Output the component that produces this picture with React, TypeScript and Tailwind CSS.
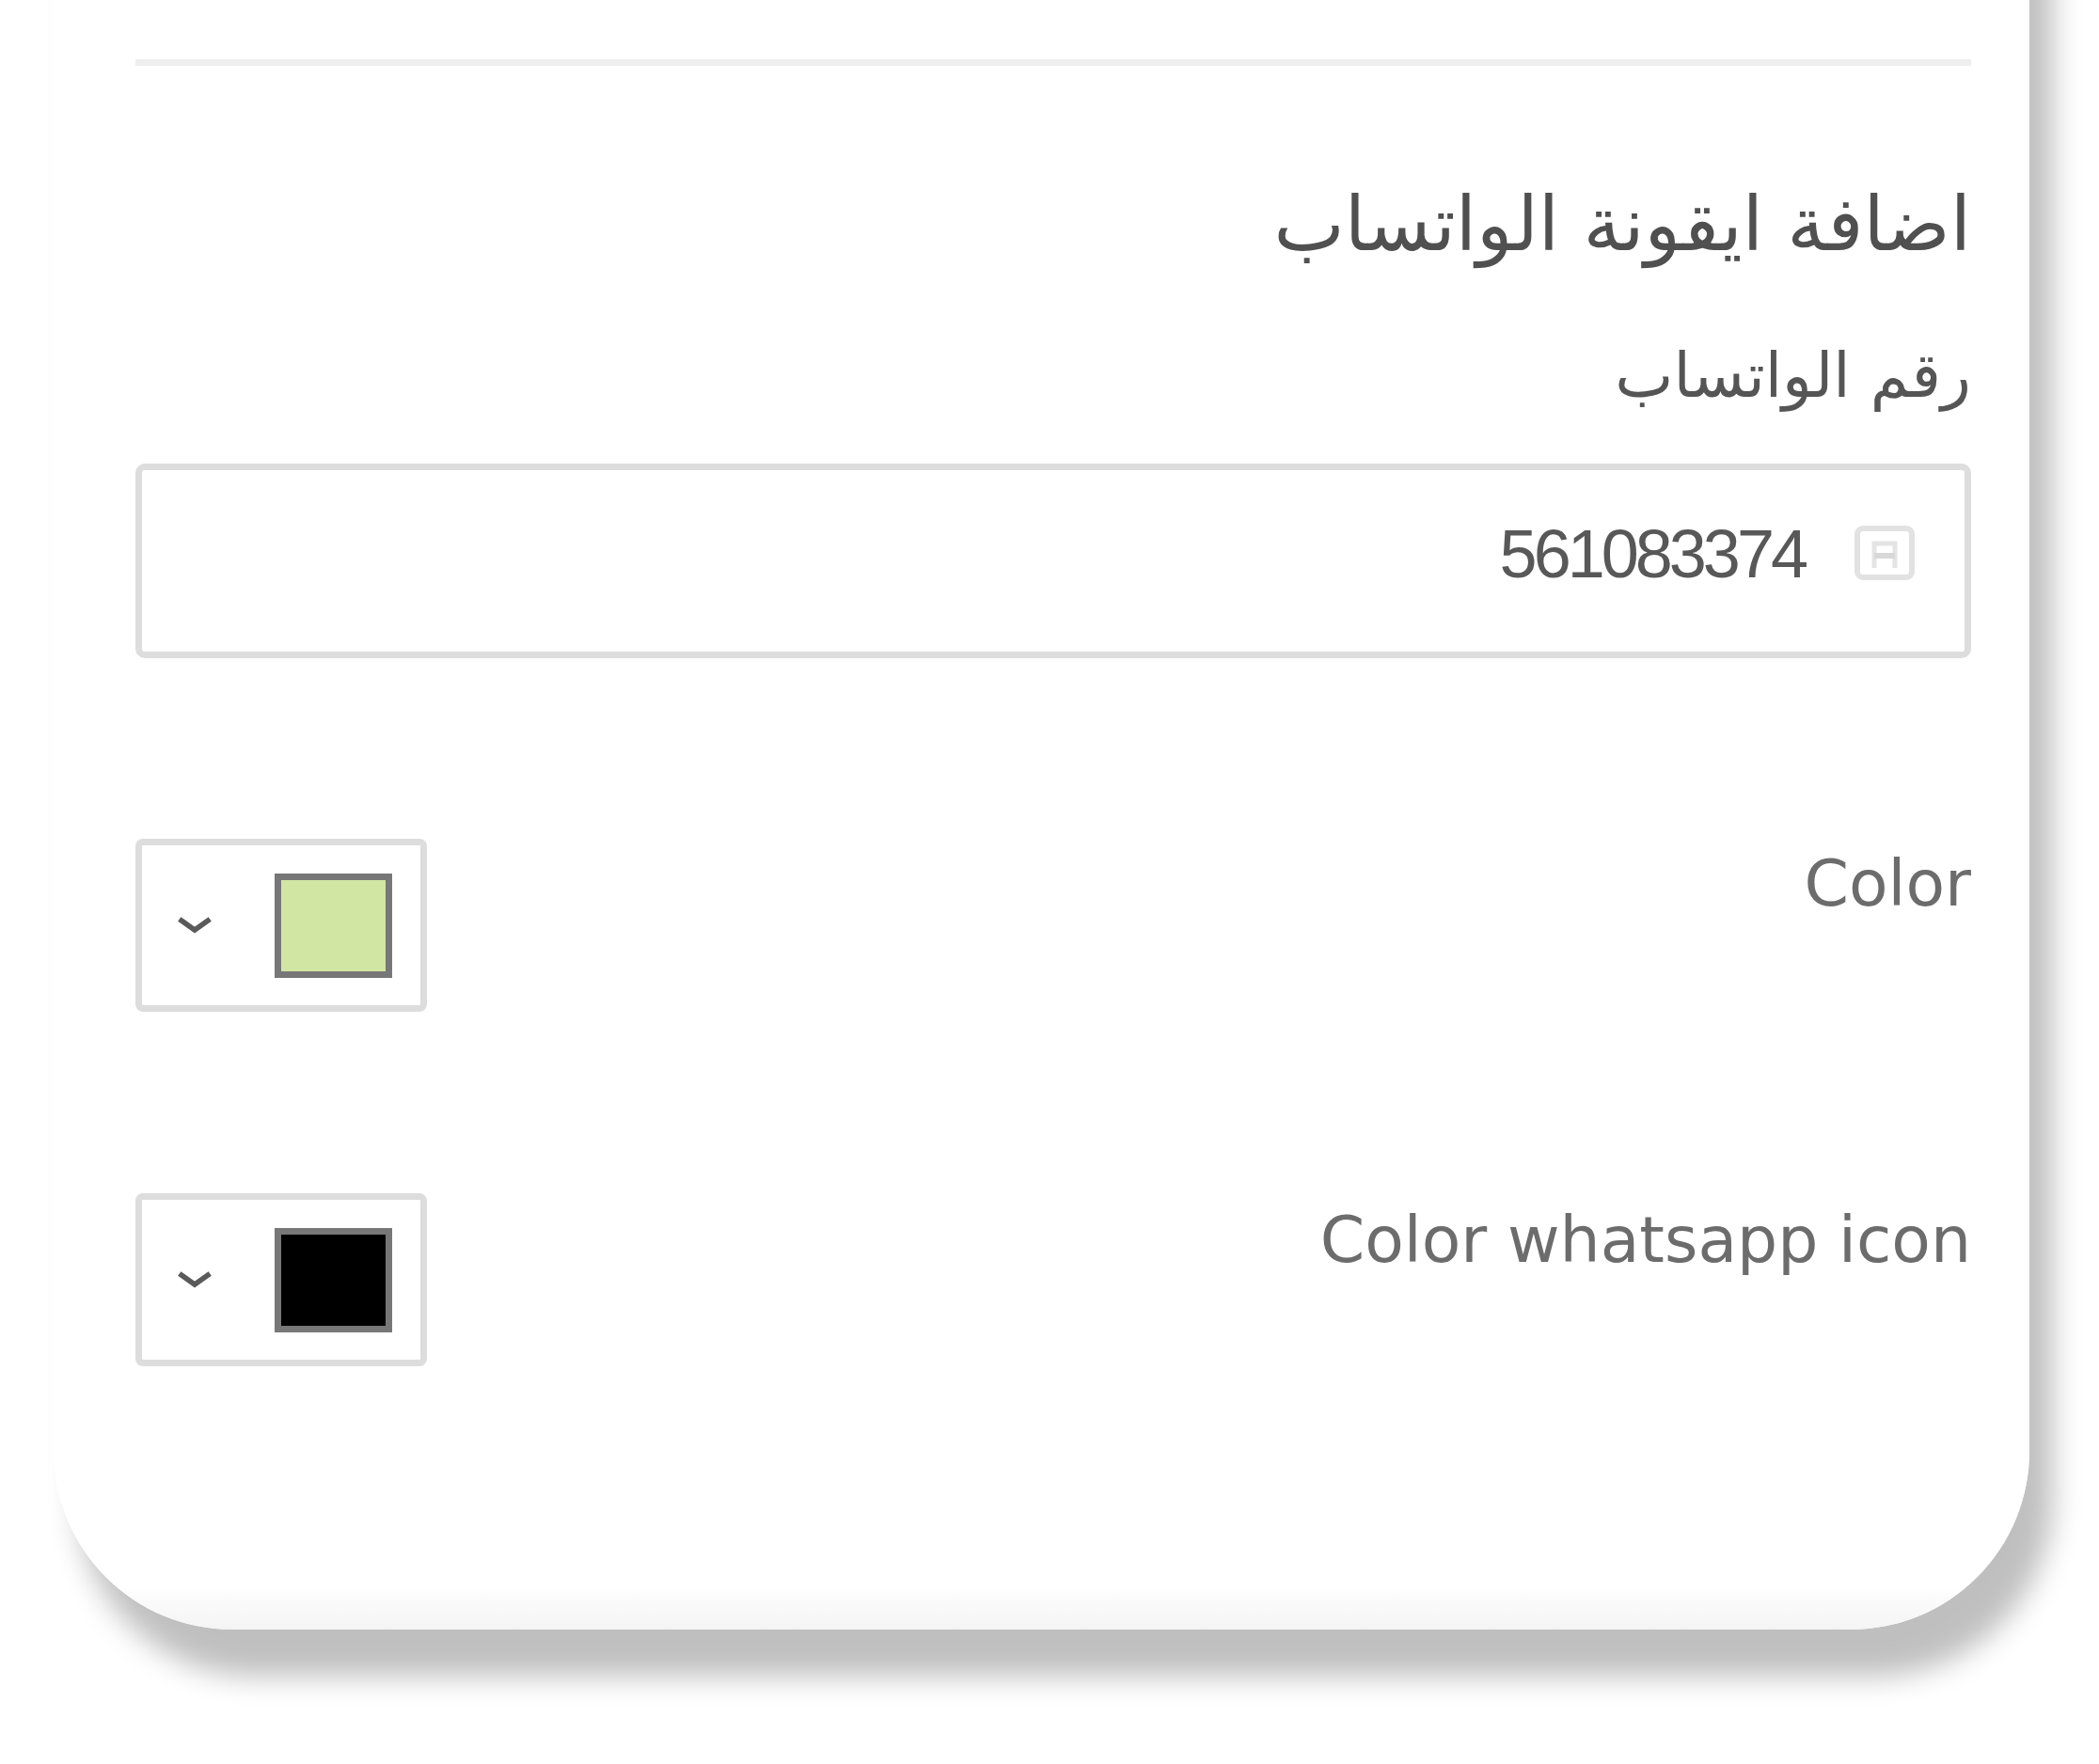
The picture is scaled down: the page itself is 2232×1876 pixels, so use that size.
import React from 'react';

const ChevronDown: React.FC = () => (
  <svg width="36" height="20" viewBox="0 0 36 20" fill="none">
    <polyline points="4,5 18,15 32,5" stroke="#5a5a5a" strokeWidth="5.5" strokeLinecap="square" />
  </svg>
);

// the little autofill badge sitting inside the input
const FillIcon: React.FC = () => (
  <svg width="66" height="62" viewBox="0 0 66 62" fill="none">
    <rect x="4" y="4" width="58" height="52" rx="6" stroke="#e2e2e2" strokeWidth="6" />
    <path d="M22 46 V20 H44 V46" stroke="#e4e4e4" strokeWidth="5" />
    <path d="M22 33 H44" stroke="#d8d8d8" strokeWidth="6" />
  </svg>
);

interface ColorRowProps {
  label: string;
  color: string;
  labelOffset: string;
}

const ColorRow: React.FC<ColorRowProps> = ({ label, color, labelOffset }) => (
  <div className="flex items-start justify-between">
    <span
      className={`text-[68px] leading-none text-[#6c6c6c] ${labelOffset}`}
      style={{ fontFamily: '"DejaVu Sans", sans-serif' }}
      dir="ltr"
    >
      {label}
    </span>
    <div
      dir="ltr"
      className="flex h-[184px] w-[310px] items-center justify-between rounded-[8px] border-[7px] border-[#dddddd] bg-white pl-[38px] pr-[30px]"
    >
      <ChevronDown />
      <div className="h-[111px] w-[125px] border-[7px] border-[#777777]" style={{ backgroundColor: color }} />
    </div>
  </div>
);

export default function App() {
  return (
    <div className="min-h-screen w-full overflow-hidden bg-white pl-[57px]">
      <div
        dir="rtl"
        className="-mt-[200px] w-[2101px] rounded-b-[190px] bg-linear-to-b from-white from-[97.5%] to-[#f4f4f4] pb-[280px] pr-[62px] pt-[263px] shadow-[25px_50px_30px_rgba(0,0,0,0.25)]"
        style={{ paddingLeft: 87 }}
      >
        <div className="h-[7px] w-full bg-[#eeeeee]" />

        <h2
          className="mt-[129px] text-[80px] font-normal leading-[80px] text-[#505050]"
          style={{ fontFamily: '"DejaVu Sans", "Noto Sans", sans-serif' }}
        >
          اضافة ايقونة الواتساب
        </h2>

        <label
          className="mt-[86px] block text-[66px] leading-[70px] text-[#555555]"
          style={{ fontFamily: '"DejaVu Sans", "Noto Sans", sans-serif' }}
        >
          رقم الواتساب
        </label>

        <div className="mt-[58px] flex h-[207px] items-center gap-[52px] rounded-[10px] border-[7px] border-[#dddddd] bg-white pb-[16px] pr-[52px]">
          <FillIcon />
          <span
            dir="ltr"
            className="text-[72px] leading-none tracking-[-4px] text-[#585858]"
            style={{ fontFamily: '"Liberation Sans", Arial, sans-serif' }}
          >
            561083374
          </span>
        </div>

        <div className="mt-[192px]">
          <ColorRow label="Color" color="#d1e6a3" labelOffset="mt-[14px]" />
        </div>

        <div className="mt-[193px]">
          <ColorRow label="Color whatsapp icon" color="#000000" labelOffset="mt-[16px]" />
        </div>
      </div>
    </div>
  );
}
